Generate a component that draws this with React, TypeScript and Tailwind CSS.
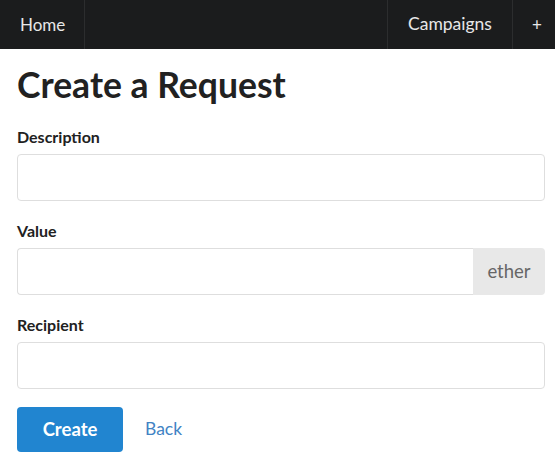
import React from "react";

const Field = ({ label, addon }: { label: string; addon?: string }) => (
  <div className="mb-[20px]">
    <label className="block text-[16px] leading-[19px] font-bold text-[#212121] mb-[8px]">
      {label}
    </label>
    <div className="flex h-[47px]">
      <input
        className={
          "flex-1 min-w-0 border border-[#dedede] bg-white px-4 text-[16px] outline-none " +
          (addon ? "rounded-l-[4px] border-r-0" : "rounded-[4px]")
        }
      />
      {addon && (
        <div className="flex w-[72px] items-center justify-center rounded-r-[4px] bg-[#e8e8e8] text-[18.5px] text-[#666666]">
          {addon}
        </div>
      )}
    </div>
  </div>
);

const App = () => {
  return (
    <div className="min-h-screen bg-white font-['Lato',sans-serif]">
      <nav className="flex h-[49px] bg-[#1b1c1d] text-[17px] text-white/90">
        <a className="flex w-[85px] items-center border-r border-[#2c2d2e] pl-5">Home</a>
        <div className="ml-auto flex">
          <a className="flex w-[125px] items-center border-l border-[#2c2d2e] pl-[20px] text-[17.5px]">
            Campaigns
          </a>
          <a className="flex w-[43px] items-center border-l border-[#2c2d2e] pl-[19px]">+</a>
        </div>
      </nav>

      <main className="pl-[17px] pr-[10px]">
        <h1 className="mt-[15px] mb-[21px] text-[35.5px] leading-[42px] font-bold text-[#212121]">
          Create a Request
        </h1>

        <form>
          <Field label="Description" />
          <Field label="Value" addon="ether" />
          <Field label="Recipient" />
          <div className="-mt-[2px] flex items-center gap-[22px]">
            <button
              type="button"
              className="h-[45px] w-[106px] rounded-[4px] bg-[#2185d0] text-[18.5px] font-bold text-white"
            >
              Create
            </button>
            <a className="text-[17.5px] text-[#4183c4]">Back</a>
          </div>
        </form>
      </main>
    </div>
  );
};

export default App;
